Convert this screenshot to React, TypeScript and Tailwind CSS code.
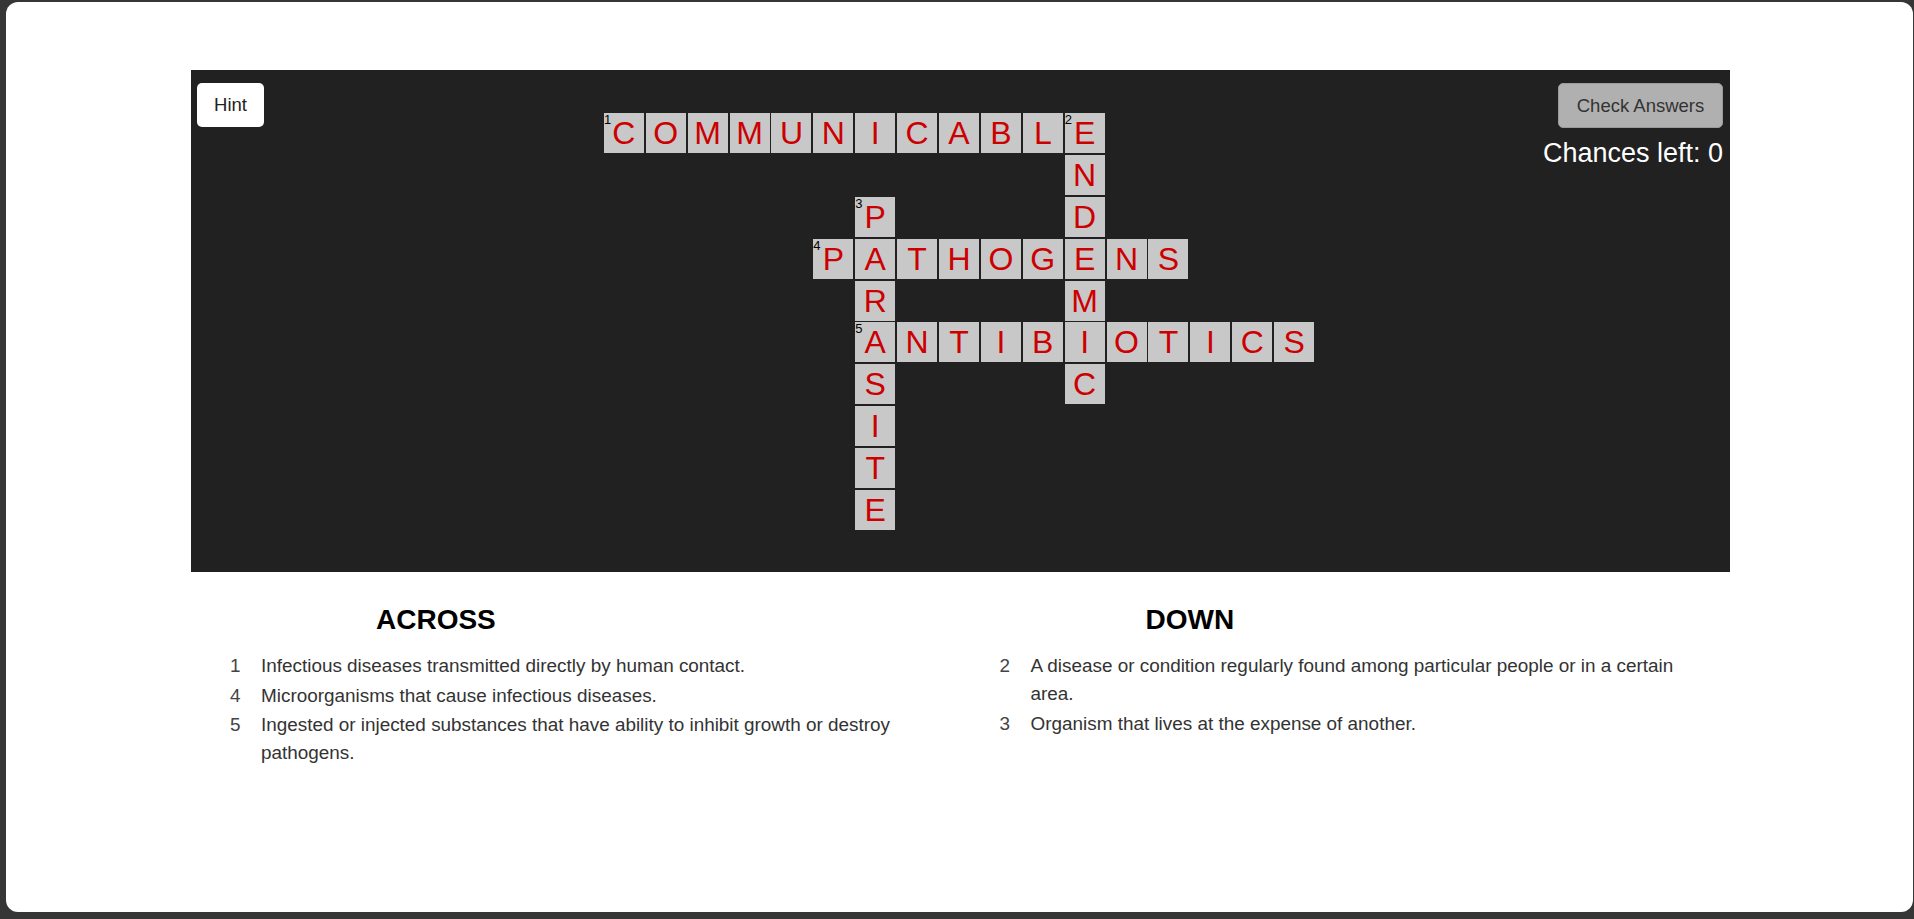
import React from "react";

const FONT = { fontFamily: '"Liberation Sans", Arial, Helvetica, sans-serif' };

type Cell = { letter: string; num?: number };

function buildGrid(): Record<string, Cell> {
  const g: Record<string, Cell> = {};
  const place = (word: string, r: number, c: number, dir: "a" | "d") => {
    for (let i = 0; i < word.length; i++) {
      const rr = dir === "d" ? r + i : r;
      const cc = dir === "a" ? c + i : c;
      g[`${rr},${cc}`] = { ...(g[`${rr},${cc}`] || {}), letter: word[i] };
    }
  };
  place("COMMUNICABLE", 0, 0, "a");
  place("ENDEMIC", 0, 11, "d");
  place("PARASITE", 2, 6, "d");
  place("PATHOGENS", 3, 5, "a");
  place("ANTIBIOTICS", 5, 6, "a");
  const nums: [number, number, number][] = [
    [0, 0, 1],
    [0, 11, 2],
    [2, 6, 3],
    [3, 5, 4],
    [5, 6, 5],
  ];
  nums.forEach(([r, c, n]) => {
    g[`${r},${c}`].num = n;
  });
  return g;
}

const GRID = buildGrid();
const ROWS = 10;
const COLS = 17;

function Board() {
  const cells = [];
  for (let r = 0; r < ROWS; r++) {
    for (let c = 0; c < COLS; c++) {
      const cell = GRID[`${r},${c}`];
      if (!cell) {
        cells.push(<div key={`${r}-${c}`} />);
      } else {
        cells.push(
          <div
            key={`${r}-${c}`}
            className="relative flex h-[40px] w-[40px] items-center justify-center bg-[#c8c8c8]"
          >
            {cell.num !== undefined && (
              <span className="absolute left-0 top-0 text-[13px] leading-none text-black">
                {cell.num}
              </span>
            )}
            <span className="text-[32px] leading-[40px] text-[#cc0000]">{cell.letter}</span>
          </div>
        );
      }
    }
  }
  return (
    <div className="grid grid-cols-[repeat(17,40px)] grid-rows-[repeat(10,40px)] gap-[1.9px]">
      {cells}
    </div>
  );
}

const across = [
  { n: 1, t: "Infectious diseases transmitted directly by human contact." },
  { n: 4, t: "Microorganisms that cause infectious diseases." },
  {
    n: 5,
    t: "Ingested or injected substances that have ability to inhibit growth or destroy pathogens.",
  },
];
const down = [
  {
    n: 2,
    t: "A disease or condition regularly found among particular people or in a certain area.",
  },
  { n: 3, t: "Organism that lives at the expense of another." },
];

function ClueColumn({ title, items }: { title: string; items: { n: number; t: string }[] }) {
  return (
    <div className="pl-[39px] pr-[30px]">
      <h2 className="pl-[146px] text-[28px] font-bold leading-[32px] text-black">{title}</h2>
      <ul className="mt-[16px] flex flex-col gap-[1.5px]">
        {items.map((it) => (
          <li key={it.n} className="flex text-[18.9px] leading-[28px]">
            <span className="w-[31px] shrink-0 text-[#444]">{it.n}</span>
            <span className="flex-1 text-[#333]">{it.t}</span>
          </li>
        ))}
      </ul>
    </div>
  );
}

export default function App() {
  return (
    <div className="h-[919px] w-full bg-[#363636] pb-[7px] pl-[6px] pr-[1px] pt-[2px]" style={FONT}>
      <div className="h-full overflow-hidden rounded-[12px] bg-white pt-[68px]">
        <div className="ml-[185px] w-[1539px]">
          <div className="grid grid-cols-[1fr_auto_1fr] bg-[#212121]">
            <div className="pl-[6px] pt-[13px]">
              <button className="h-[44px] w-[67px] rounded-[5px] bg-white text-[18.5px] text-[#222]">
                Hint
              </button>
            </div>
            <div className="pb-[42px] pr-[3px] pt-[43px]">
              <Board />
            </div>
            <div className="flex flex-col items-end pr-[7px] pt-[13px]">
              <button className="h-[45px] w-[165px] rounded-[5px] border border-[#9a9a9a] bg-[#b0b0b0] text-[18.5px] text-[#333]">
                Check Answers
              </button>
              <div className="mt-[10px] text-[27px] leading-[31px] text-white">Chances left: 0</div>
            </div>
          </div>
          <div className="mt-[32px] grid grid-cols-2">
            <ClueColumn title="ACROSS" items={across} />
            <ClueColumn title="DOWN" items={down} />
          </div>
        </div>
      </div>
    </div>
  );
}
